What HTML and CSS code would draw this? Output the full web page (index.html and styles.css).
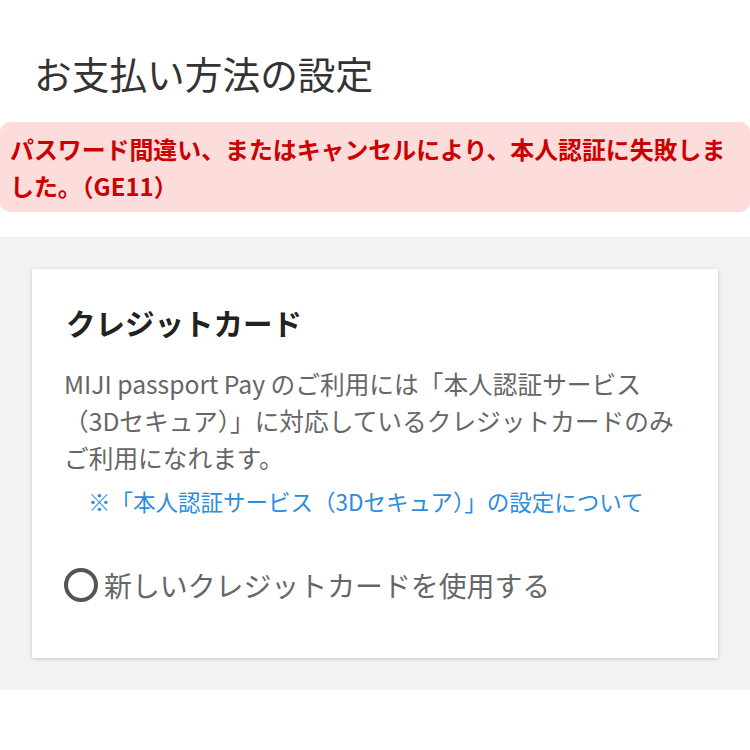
FILE: index.html
```html
<!DOCTYPE html>
<html lang="ja">
<head>
  <meta charset="UTF-8" />
  <meta name="viewport" content="width=device-width, initial-scale=1.0"/>
  <title>お支払い方法の設定</title>
  <link rel="stylesheet" href="styles.css">
</head>
<body>
  <h1 class="page-title">お支払い方法の設定</h1>

  <div class="error-box">
    パスワード間違い、またはキャンセルにより、本人認証に失敗しました。（GE11）
  </div>

  <div class="pay-area">
    <div class="card">
      <h2>クレジットカード</h2>
      <p class="note">MIJI passport Pay のご利用には「本人認証サービス（3Dセキュア）」に対応しているクレジットカードのみご利用になれます。</p>
      <a href="#" class="secure-link">※「本人認証サービス（3Dセキュア）」の設定について</a>
      <label class="radio-row">
        <span class="radio"></span>
        新しいクレジットカードを使用する
      </label>
    </div>
  </div>
</body>
</html>
```

FILE: styles.css
```css
:root {
  --color-text: #333;
  --color-sub: #666;
  --color-error: #cc0000;
  --color-error-bg: #fddcdc;
  --color-link: #2b8ddb;
  --color-area: #f2f2f2;
}

body {
  margin: 0;
  padding: 0;
  font-family: "Noto Sans CJK JP", "Noto Sans", sans-serif;
  background: #fff;
  color: var(--color-text);
}

.page-title {
  margin: 0;
  padding: 46px 34px 22px;
  font-size: 37.7px;
  font-weight: normal;
  line-height: 54px;
}

.error-box {
  background: var(--color-error-bg);
  color: var(--color-error);
  border-radius: 10px;
  padding: 8px 20px 8px 10px;
  font-size: 23.9px;
  font-weight: bold;
  line-height: 37px;
}

.pay-area {
  margin-top: 25px;
  background: var(--color-area);
  padding: 32px;
}

.card {
  background: #fff;
  box-shadow: 0 1px 4px rgba(0, 0, 0, 0.18);
  padding: 32px 34px 53px 32px;
}

.card h2 {
  margin: 0 0 22px 2px;
  font-size: 29.5px;
  line-height: 42px;
  color: #222;
}

.note {
  margin: 0;
  font-size: 24.7px;
  line-height: 37px;
  color: var(--color-sub);
}

.secure-link {
  display: block;
  margin: 9px 0 0 24px;
  font-size: 22.5px;
  line-height: 32px;
  color: var(--color-link);
  text-decoration: none;
}

.radio-row {
  display: flex;
  align-items: center;
  gap: 6px;
  margin-top: 48px;
  font-size: 27.9px;
  line-height: 40px;
  color: var(--color-sub);
}

.radio {
  width: 26px;
  height: 26px;
  border: 4px solid #555;
  border-radius: 50%;
  flex: none;
}
```
